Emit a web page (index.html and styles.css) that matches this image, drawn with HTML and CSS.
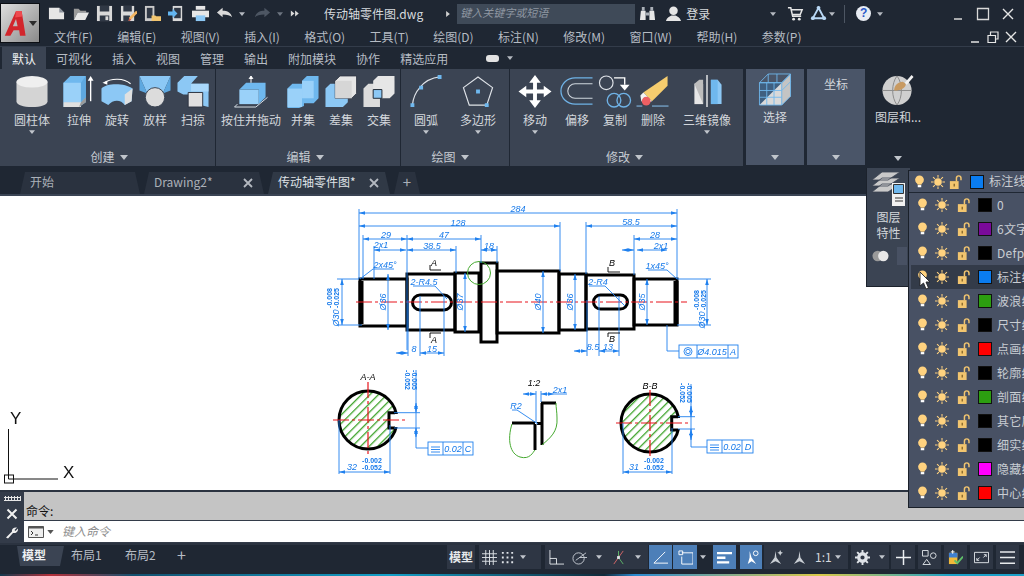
FILE: index.html
```html
<!DOCTYPE html>
<html lang="zh">
<head>
<meta charset="utf-8">
<title>传动轴零件图.dwg</title>
<link rel="stylesheet" href="styles.css">
</head>
<body>
<svg class="defs" width="0" height="0">
  <defs>
    <symbol id="bulb" viewBox="0 0 12 16"><circle cx="6" cy="5.5" r="5" fill="#ffd27f"/><path d="M3.6 9h4.8v2H3.6z" fill="#ffd27f"/><path d="M4 11.5h4v2.5H4z" fill="#fff"/></symbol>
    <symbol id="sun" viewBox="0 0 16 16"><circle cx="8" cy="8" r="4.3" fill="#ffd27f"/><path d="M8 0v3M8 13v3M0 8h3M13 8h3M2.3 2.3l2.2 2.2M11.5 11.5l2.2 2.2M13.7 2.3l-2.2 2.2M4.5 11.5l-2.2 2.2" stroke="#ffd27f" stroke-width="1.2"/></symbol>
    <symbol id="lock" viewBox="0 0 16 16"><path d="M1 7h10v9H1z" fill="#f2c56f"/><path d="M8.5 7V3.6A2.6 2.6 0 0 1 13.7 3.6V6" fill="none" stroke="#f2c56f" stroke-width="1.7"/><path d="M5.2 10h1.6v3H5.2z" fill="#8a6a2c"/></symbol>
    <symbol id="dd" viewBox="0 0 8 5"><path d="M0 0h8L4 5z" fill="currentColor"/></symbol>
    <marker id="ar" viewBox="0 0 10 6" refX="10" refY="3" markerWidth="6" markerHeight="4" orient="auto-start-reverse" markerUnits="userSpaceOnUse"><path d="M0 0L10 3L0 6z" fill="#1f80ee"/></marker>
    <pattern id="hatch" width="6" height="6" patternUnits="userSpaceOnUse" patternTransform="rotate(45)"><rect width="6" height="6" fill="#fff"/><rect width="1.3" height="6" fill="#3da32a"/></pattern>
  </defs>
</svg>
<div class="app">
  <header class="head">
    <div class="logo">
      <svg class="logo-a" viewBox="0 0 30 34"><path d="M1 33L15 2h7l5 31h-7l-1-7h-7l-4 7z" fill="#d2262c"/><path d="M15 12l-4 9h6z" fill="#bdbdbd"/><path d="M15 2h7l1 7-9 1z" fill="#ee4a4f"/></svg>
      <svg class="logo-dd"><use href="#dd"/></svg>
    </div>
    <div class="head-rows">
      <div class="qat">
        <svg class="qi" viewBox="0 0 18 18"><path d="M1 3h11l5 5v7H1z" fill="#e6e6e6"/><path d="M12 3v5h5z" fill="#8b929c"/></svg>
        <svg class="qi" viewBox="0 0 18 18"><path d="M2 4h5l2 2h6v2H6L2 16z" fill="#9a9a9a"/><path d="M6 8h12l-4 8H2z" fill="#e6e6e6"/></svg>
        <svg class="qi" viewBox="0 0 18 18"><path d="M1 1h16v16H1z" fill="#d9d9d9"/><path d="M4 1h10v6H4zM4 11h10v6H4z" fill="#303845"/><path d="M10 12h3v4h-3z" fill="#d9d9d9"/></svg>
        <svg class="qi" viewBox="0 0 18 18"><path d="M1 1h14v16H1z" fill="#d9d9d9"/><path d="M3.5 1h9v6h-9zM3.5 11h7v6h-7z" fill="#303845"/><path d="M9 17l1-4 7-7 2 2-7 7z" fill="#f3b562"/><path d="M9 17l1-3 2 2z" fill="#d04b4b"/></svg>
        <svg class="qi" viewBox="0 0 18 18"><path d="M1 1h10v16H1z" fill="#c9c9c9"/><path d="M3 3h6v11H3z" fill="#303845"/><path d="M8 11h4l1 1h5v5H8z" fill="#f2c56f"/></svg>
        <svg class="qi" viewBox="0 0 18 18"><path d="M5 1h10v16H5z" fill="#d9d9d9"/><path d="M6.5 3h7v11h-7z" fill="#303845"/><path d="M0 7h5V4l5 5-5 5v-3H0z" fill="#63b5f0"/></svg>
        <svg class="qi" viewBox="0 0 18 18"><path d="M4 1h10v4H4z" fill="#e6e6e6"/><path d="M0 6h18v7H0z" fill="#e6e6e6"/><path d="M4 11h10v6H4z" fill="#8cc8f5"/></svg>
        <svg class="qi" viewBox="0 0 18 18"><path d="M1 8l6-5v3c5 0 9 2 10 7-2-2-5-3-10-3v3z" fill="#d9d9d9"/></svg>
        <svg class="qd"><use href="#dd"/></svg>
        <svg class="qi" viewBox="0 0 18 18"><path d="M17 8l-6-5v3c-5 0-9 2-10 7 2-2 5-3 10-3v3z" fill="#4d5663"/></svg>
        <svg class="qd faded"><use href="#dd"/></svg>
        <svg class="qi sm" viewBox="0 0 18 18"><path d="M3 4l6 5-6 5zM10 4l6 5-6 5z" fill="#d9d9d9"/></svg>
        <span class="doc-title">传动轴零件图.dwg</span>
        <svg class="qd rot"><use href="#dd"/></svg>
        <div class="search">键入关键字或短语</div>
        <svg class="qi bino" viewBox="0 0 18 18"><path d="M2 6h5v10H1zM11 6h5l1 10h-6z" fill="#e6e6e6"/><path d="M3 2h3v4H3zM12 2h3v4h-3zM7 8h4v3H7z" fill="#aab0b8"/></svg>
        <svg class="qi user" viewBox="0 0 18 18"><circle cx="9" cy="6" r="4.5" fill="#e6e6e6"/><path d="M1 17c1-4 4-5 6-6h4c2 1 5 2 6 6z" fill="#e6e6e6"/></svg>
        <span class="login">登录</span>
        <svg class="qd login-dd"><use href="#dd"/></svg>
        <svg class="qi cart" viewBox="0 0 18 18"><path d="M1 3h3l2 9h9M5 5h11l-2 5H6" fill="none" stroke="#e6e6e6" stroke-width="1.6"/><circle cx="7" cy="15" r="1.5" fill="#e6e6e6"/><circle cx="13" cy="15" r="1.5" fill="#e6e6e6"/></svg>
        <svg class="qi tri" viewBox="0 0 18 18"><path d="M9 3L3 14h12z" fill="none" stroke="#b9d8f5" stroke-width="2"/><circle cx="9" cy="3" r="2" fill="#b9d8f5"/><circle cx="3" cy="14" r="2" fill="#b9d8f5"/><circle cx="15" cy="14" r="2" fill="#b9d8f5"/></svg>
        <svg class="qd"><use href="#dd"/></svg>
        <span class="sep"></span>
        <span class="help">?</span>
        <svg class="qd"><use href="#dd"/></svg>
        <svg class="win" viewBox="0 0 14 14"><path d="M3 12h8" stroke="#d9d9d9" stroke-width="1.5"/></svg>
        <svg class="win" viewBox="0 0 14 14"><path d="M1.5 1.5h11v11h-11z" fill="none" stroke="#d9d9d9" stroke-width="1.3"/></svg>
        <svg class="win" viewBox="0 0 14 14"><path d="M2 2l10 10M12 2L2 12" stroke="#e6e6e6" stroke-width="1.4"/></svg>
      </div>
      <nav class="menu">
        <span>文件(F)</span><span>编辑(E)</span><span>视图(V)</span><span>插入(I)</span><span>格式(O)</span><span>工具(T)</span><span>绘图(D)</span><span>标注(N)</span><span>修改(M)</span><span>窗口(W)</span><span>帮助(H)</span><span>参数(P)</span>
        <div class="doc-win">
          <svg class="win2" viewBox="0 0 12 12"><path d="M2 11h8" stroke="#e6e6e6" stroke-width="1.5"/></svg>
          <svg class="win2" viewBox="0 0 12 12"><path d="M1 4.5h7.5v7H1zM3.5 4V1H11v7H9" fill="none" stroke="#e6e6e6" stroke-width="1.2"/></svg>
          <svg class="win2" viewBox="0 0 12 12"><path d="M1 1l10 10M11 1L1 11" stroke="#e6e6e6" stroke-width="1.4"/></svg>
        </div>
      </nav>
    </div>
  </header>

  <div class="rtabs">
    <span class="rtab on">默认</span><span class="rtab">可视化</span><span class="rtab">插入</span><span class="rtab">视图</span><span class="rtab">管理</span><span class="rtab">输出</span><span class="rtab">附加模块</span><span class="rtab">协作</span><span class="rtab">精选应用</span>
    <span class="pill"></span><svg class="qd"><use href="#dd"/></svg>
  </div>

  <section class="ribbon">
    <div class="panel p-create">
      <div class="tools">
        <div class="tool t-cyl"><svg class="ic" viewBox="0 0 34 34"><path d="M1 7v20c0 4 7 6 16 6s16-2 16-6V7z" fill="#d4d4d4"/><ellipse cx="17" cy="7" rx="16" ry="6" fill="#efefef"/></svg><span>圆柱体</span><svg class="tdd"><use href="#dd"/></svg></div>
        <div class="tool"><svg class="ic" viewBox="0 0 34 34"><path d="M1 8l7-7h16v27l-7 5H1z" fill="#6fb8ee"/><path d="M1 8h18v20H1z" fill="#9ad1f9"/><path d="M19 8l5-7v22l-5 5z" fill="#5ea8e0"/><path d="M1 28h18v5H1z" fill="#e0e0e0"/><path d="M19 28l5-5v5l-7 5z" fill="#9a9a9a"/><path d="M29 27V4" stroke="#fff" stroke-width="1.4"/><path d="M26 6l3-5 3 5z" fill="#fff"/></svg><span>拉伸</span></div>
        <div class="tool"><svg class="ic" viewBox="0 0 34 34"><path d="M1 14c5-6 24-6 32 0l-1 13-7 4c-4-6-12-6-17 0l-7-4z" fill="#8cc8f5"/><path d="M25 20l8-6-1 13-7 4z" fill="#e0e0e0"/><path d="M4 8c7-5 20-5 27 1" fill="none" stroke="#fff" stroke-width="1.2"/><path d="M2 8l5-2v4z" fill="#fff"/></svg><span>旋转</span></div>
        <div class="tool"><svg class="ic" viewBox="0 0 34 34"><path d="M1 1h32l-8 18H9z" fill="#8cc8f5"/><path d="M1 1l8 18-8-3zM33 1l-8 18 8-3z" fill="#5ea8e0"/><circle cx="17" cy="23" r="10" fill="#dcdcdc" stroke="#3a4352" stroke-width="1"/></svg><span>放样</span></div>
        <div class="tool"><svg class="ic" viewBox="0 0 34 34"><path d="M1 8l7-7h14l-7 8 18 0v24l-16-4V20H7l-6-3z" fill="#8cc8f5"/><path d="M15 9h18v8H15z" fill="#a9d8fb"/><path d="M12 18h15v15H12z" fill="#e0e0e0" stroke="#2c3340"/></svg><span>扫掠</span></div>
      </div>
      <div class="ptitle">创建<svg class="pdd"><use href="#dd"/></svg></div>
    </div>
    <div class="panel p-edit">
      <div class="tools">
        <div class="tool w62"><svg class="ic" viewBox="0 0 34 34"><path d="M5 15h20v15H5z" fill="#9ad1f9"/><path d="M5 15l7-7h20l-7 7zM25 15l7-7v15l-7 7z" fill="#6fb8ee"/><path d="M17 8V2M15 4l2-3 2 3" stroke="#fff" fill="#fff"/><path d="M0 33h22M22 33l12-10M3 30l-3 3" stroke="#dce3ea" stroke-width="1"/></svg><span>按住并拖动</span></div>
        <div class="tool ml2"><svg class="ic" viewBox="0 0 34 34"><path d="M1 14l5-5h10v-3l5-5h12v23l-5 5h-10v3l-5 2H1z" fill="#6fb8ee"/><path d="M1 14h15v19H1z" fill="#9ad1f9"/><path d="M16 6h12v18H16z" fill="#9ad1f9"/></svg><span>并集</span></div>
        <div class="tool"><svg class="ic" viewBox="0 0 34 34"><path d="M1 14l5-5h8v14h10v5l-5 5H1z" fill="#8cc8f5"/><path d="M11 6l5-5h17v18l-5 5H11z" fill="#e6e6e6" stroke="#2c3340" stroke-width=".8"/><path d="M11 6h17v18H11z" fill="#d6d6d6"/></svg><span>差集</span></div>
        <div class="tool"><svg class="ic" viewBox="0 0 34 34"><path d="M1 14l5-5h12v24H1z" fill="#dcdcdc"/><path d="M11 6l5-5h17v18l-5 5H11z" fill="#e6e6e6"/><path d="M11 15h9v9h-9z" fill="#8cc8f5" stroke="#1f2733" stroke-width="1"/></svg><span>交集</span></div>
      </div>
      <div class="ptitle">编辑<svg class="pdd"><use href="#dd"/></svg></div>
    </div>
    <div class="panel p-draw">
      <div class="tools">
        <div class="tool w50"><svg class="ic" viewBox="0 0 34 34"><path d="M3 31C4 18 14 4 31 2" fill="none" stroke="#dfe3e8" stroke-width="1.2"/><path d="M1 29h4v4H1zM10 11h4v4h-4zM29 0h4v4h-4z" fill="#6fb8ee"/></svg><span>圆弧</span><svg class="tdd"><use href="#dd"/></svg></div>
        <div class="tool w54"><svg class="ic" viewBox="0 0 34 34"><path d="M17 2l15 11-6 18H8L2 13z" fill="none" stroke="#dfe3e8" stroke-width="1.2"/><path d="M15 15h4v4h-4zM24 29h4v4h-4z" fill="#6fb8ee"/></svg><span>多边形</span><svg class="tdd"><use href="#dd"/></svg></div>
      </div>
      <div class="ptitle">绘图<svg class="pdd"><use href="#dd"/></svg></div>
    </div>
    <div class="panel p-mod">
      <div class="tools">
        <div class="tool"><svg class="ic" viewBox="0 0 34 34"><path d="M17 0l6 8h-4v7h7v-4l8 6-8 6v-4h-7v7h4l-6 8-6-8h4v-7H8v4l-8-6 8-6v4h7V8h-4z" fill="#fff"/></svg><span>移动</span><svg class="tdd"><use href="#dd"/></svg></div>
        <div class="tool ml4"><svg class="ic" viewBox="0 0 34 34"><path d="M33 3H15A14 13 0 0 0 15 30h18" fill="none" stroke="#6fb2e6" stroke-width="1.3"/><path d="M33 9H15a7.500 7.500 0 0 0 0 15h18" fill="none" stroke="#cfd6dd" stroke-width="1.1"/></svg><span>偏移</span></div>
        <div class="tool"><svg class="ic" viewBox="0 0 34 34"><circle cx="8" cy="8" r="7" fill="none" stroke="#dfe3e8" stroke-width="1.2"/><path d="M16 3h11v7" fill="none" stroke="#fff" stroke-width="1.4"/><path d="M22 10h10l-5 6z" fill="#fff"/><circle cx="16" cy="26" r="7" fill="none" stroke="#6fb2e6" stroke-width="1.4"/><circle cx="26" cy="26" r="7" fill="none" stroke="#6fb2e6" stroke-width="1.4"/></svg><span>复制</span></div>
        <div class="tool"><svg class="ic" viewBox="0 0 34 34"><path d="M32 1v10L16 27l-9-9z" fill="#f6cd6e"/><path d="M7 18l-3 3 1 6 5 2 6-2z" fill="#f3f3f3"/><circle cx="10" cy="27" r="4.500" fill="#ee5f63"/><path d="M0 32h6M16 32h17" stroke="#8cc8f5" stroke-width="1"/></svg><span>删除</span></div>
        <div class="tool w56"><svg class="ic" viewBox="0 0 34 34"><path d="M4 9h9v21H4z" fill="#e6e6e6"/><path d="M4 9l5-4h4v25z" fill="#bdbdbd"/><path d="M21 5h7l4 5v20H21z" fill="#8cc8f5"/><path d="M21 5v25h7V5z" fill="#6fb8ee"/><path d="M17 0v33" stroke="#fff" stroke-width="1.3"/></svg><span>三维镜像</span><svg class="tdd"><use href="#dd"/></svg></div>
      </div>
      <div class="ptitle">修改<svg class="pdd"><use href="#dd"/></svg></div>
    </div>
    <div class="panel side p-sel">
      <div class="tool full"><svg class="ic" viewBox="0 0 34 34"><path d="M1 10h23v23H1z" fill="#3f5f80"/><path d="M24 33H1L24 10z" fill="#d9d9d9"/><path d="M24 10l9-9v23l-9 9z" fill="#c4c4c4"/><path d="M1 10l9-9h23l-9 9zM1 10h23v23H1zM8.500 10v23M16 10v23M1 18h23M1 25h23M24 10l9-9v23l-9 9M10 1v9M19 1v9M24 18l9-9" fill="none" stroke="#6fb8ee" stroke-width=".9"/></svg><span>选择</span></div>
      <svg class="sdd"><use href="#dd"/></svg>
    </div>
    <div class="panel side p-coord">
      <div class="tool full top"><span>坐标</span></div>
      <svg class="sdd"><use href="#dd"/></svg>
    </div>
    <div class="panel-plain">
      <div class="tool full"><svg class="ic" viewBox="0 0 34 34"><circle cx="16" cy="18" r="15" fill="#cfcfcf"/><path d="M1 18h30M16 3c-6 8-6 22 0 30M16 3c6 8 6 22 0 30" stroke="#8a8a8a" fill="none"/><path d="M13 18c0-5 4-9 9-9l3 2c0 4-4 7-12 7z" fill="#c89a62"/><path d="M24 10l7-8 2 2-7 8z" fill="#f2f2f2"/></svg><span>图层和...</span></div>
      <svg class="sdd"><use href="#dd"/></svg>
    </div>
  </section>

  <div class="dtabs">
    <span class="dtab first">开始</span>
    <span class="dtab">Drawing2*<svg class="dx" viewBox="0 0 10 10"><path d="M1 1l8 8M9 1l-8 8" stroke="#b4b9c0" stroke-width="1.8"/></svg></span>
    <span class="dtab on">传动轴零件图*<svg class="dx" viewBox="0 0 10 10"><path d="M1 1l8 8M9 1l-8 8" stroke="#b4b9c0" stroke-width="1.8"/></svg></span>
    <span class="dadd">+</span>
  </div>

  <main class="canvas">
    <svg class="drawing" viewBox="0 196 1024 294">
      <g class="shaft">
        <rect x="360" y="279" width="47" height="47"/><rect x="407" y="274" width="48" height="56"/><rect x="455" y="273" width="24" height="59"/><rect x="481" y="263" width="16" height="79"/><rect x="497" y="271" width="62" height="62"/><rect x="559" y="274" width="27" height="56"/><rect x="586" y="275" width="48" height="54"/><rect x="634" y="279" width="43" height="46"/>
        <rect x="412.500" y="295" width="39" height="15" rx="7.500"/><rect x="593.500" y="295" width="34" height="14" rx="7"/>
        <path class="thick" d="M361 281v43M676 281v43"/>
      </g>
      <g class="center"><path d="M356 302H687"/></g>
      <circle class="green" cx="479" cy="273" r="11.500"/>
      <g class="dim">
        <path class="d" d="M359 213H677"/><path class="d" d="M359 226H560"/><path class="d" d="M586 226H677"/>
        <path class="d" d="M363 239H407"/><path class="d" d="M407 239H481"/><path class="d" d="M634 239H677"/>
        <path class="d" d="M374 250H406"/><path class="d" d="M407 250H456"/><path class="d" d="M481 250H497"/>
        <path class="d" d="M622 250H634"/><path class="d" d="M637 250H667"/>
        <path class="d" d="M388 274V330"/><path class="d" d="M465 273V332"/><path class="d" d="M543 271V333"/><path class="d" d="M575 274V330"/><path class="d" d="M647 279V325"/>
        <path class="d" d="M342 279V325"/><path class="d" d="M707 279V325"/>
        <path class="d" d="M396 353H408"/><path class="d" d="M420 353H444"/><path class="d" d="M574 351H587"/><path class="d" d="M599 351H619"/>
        <path d="M359 209V279M677 209V279M560 222V271M586 222V274M363 235V279M407 235V350M481 235V263M497 246V263M634 235V275M456 246V273M374 246V279"/>
        <path d="M408 300V356M420 296V356M444 296V356M587 300V356M599 296V356M619 296V356"/>
        <path d="M337 279H359M337 325H362M677 279H711M677 325H711"/>
        <path d="M360 279L373 269H394M677 279L667 270H648M413 286H435L447 299M589 286H605L625 306"/>
        <rect x="679" y="345" width="59" height="13"/><path d="M697 345V358M728 345V358M667 325V351H679"/>
        <circle cx="688" cy="351.500" r="4"/><circle cx="688" cy="351.500" r="2.200"/>
        <text x="518" y="212">284</text><text x="458" y="226">128</text><text x="631" y="225">58.5</text><text x="386" y="238">29</text><text x="444" y="238">47</text><text x="655" y="238">28</text>
        <text x="381" y="248">2x1</text><text x="432" y="249">38.5</text><text x="489" y="249">18</text><text x="661" y="249">2x1</text>
        <text x="385" y="268">2x45°</text><text x="657" y="269">1x45°</text><text x="424" y="285">2-R4.5</text><text x="598" y="285">2-R4</text>
        <text x="414" y="352">8</text><text x="432" y="352">15</text><text x="593" y="350">8.5</text><text x="608" y="350">13</text>
        <text x="712" y="355">Ø4.015</text><text x="733" y="355">A</text>
        <text class="v" transform="translate(386 302) rotate(-90)">Ø36</text><text class="v" transform="translate(463 302) rotate(-90)">Ø37</text><text class="v" transform="translate(541 302) rotate(-90)">Ø40</text><text class="v" transform="translate(573 302) rotate(-90)">Ø36</text><text class="v" transform="translate(645 302) rotate(-90)">Ø35</text>
        <text class="v" transform="translate(339 318) rotate(-90)">Ø30</text>
        <text class="v" transform="translate(705 320) rotate(-90)">Ø30</text>
        <text class="blob" transform="translate(332 298) rotate(-90)">-0.008</text><text class="blob" transform="translate(339 298) rotate(-90)">-0.025</text>
        <text class="blob" transform="translate(699 300) rotate(-90)">-0.008</text><text class="blob" transform="translate(706 300) rotate(-90)">-0.025</text>
      </g>
      <g class="mark">
        <path d="M430 265V270H441M430 338V333H441M608 267V272H620M608 337V333H620"/>
        <text x="434" y="266">A</text><text x="434" y="343">A</text><text x="612" y="266">B</text><text x="612" y="342">B</text>
      </g>

      <g>
        <circle class="sect" cx="368" cy="420" r="29"/>
        <rect class="cut" x="389" y="414" width="12" height="13"/>
        <path class="key" d="M395 412.700H389V428H395"/>
        <path class="center" d="M333 420H406M368 382V455"/>
        <text class="blk" x="368" y="380">A-A</text>
        <g class="dim">
          <path class="d" d="M416 403V412"/><path class="d" d="M416 437V428"/>
          <path d="M416 370V448H428M394 412.700H420M394 428H420M339 420V474M390 425V474"/>
          <path class="d" d="M339 472H390"/>
          <rect x="428" y="442" width="45" height="13"/><path d="M443 442V455M463 442V455M431 447H440M431 449.500H440M431 452H440"/>
          <text x="453" y="452">0.02</text><text x="468" y="452">C</text>
          <text x="352" y="470">32</text><text class="blob" x="372" y="463">-0.002</text><text class="blob" x="372" y="470">-0.052</text>
          <text class="blob" transform="translate(412 380) rotate(90)">-0.005</text><text class="blob" transform="translate(405 380) rotate(90)">-0.052</text>
        </g>
      </g>

      <g>
        <path class="shaftline" d="M512 423H535M535 424V450M542 403V445M541 403H556M537 423.500H542"/>
        <path class="green" d="M512 424C507 440 510 454 520 457C530 460 533 452 535 450M542 445C550 438 558 432 557 418C557 412 556 408 556 403"/>
        <text class="blk" x="534" y="386">1:2</text>
        <g class="dim">
          <path class="d" d="M523 394H536"/><path class="d" d="M554 394H541"/>
          <path d="M536 391V423M541 391V402M554 394H567M512 410H517L538 424"/>
          <text x="560" y="393">2x1</text><text x="516" y="409">R2</text>
        </g>
      </g>

      <g>
        <circle class="sect" cx="650" cy="423" r="29"/>
        <rect class="cut" x="672" y="418" width="12" height="11"/>
        <path class="key" d="M678 416.700H671.700V430H678"/>
        <path class="center" d="M616 423H689M650 390V458"/>
        <text class="blk" x="650" y="389">B-B</text>
        <g class="dim">
          <path class="d" d="M691 406V416.700"/><path class="d" d="M691 440V429"/>
          <path d="M691 384V447H707M678 416.700H695M678 429H695M623 423V474M672 428V474"/>
          <path class="d" d="M623 472H672"/>
          <rect x="707" y="440" width="46" height="13"/><path d="M722 440V453M742 440V453M710 445H719M710 447.500H719M710 450H719"/>
          <text x="732" y="450">0.02</text><text x="748" y="450">D</text>
          <text x="634" y="470">31</text><text class="blob" x="654" y="463">-0.002</text><text class="blob" x="654" y="470">-0.052</text>
          <text class="blob" transform="translate(687 393) rotate(90)">-0.005</text><text class="blob" transform="translate(680 393) rotate(90)">-0.052</text>
        </g>
      </g>

      <g class="ucs">
        <path d="M8.500 429V479M8.500 479H58"/><rect x="4.500" y="475" width="9" height="8"/>
        <text x="10" y="424">Y</text><text x="63" y="478">X</text>
      </g>
    </svg>

    <div class="layer-panel">
      <svg class="lp-ic" viewBox="0 0 34 34"><path d="M10 0h18L16 8H0zM10 6h18L16 14H0zM10 12h18L16 20H0z" fill="#c9c9c9" stroke="#3a4352" stroke-width=".8"/><path d="M20 11h13v23H20z" fill="#f2f2f2"/><path d="M21.500 12.500h10v9h-10z" fill="#6fb8ee" stroke="#333"/><path d="M23 26h8M23 29h8" stroke="#333"/></svg>
      <span>图层</span><span>特性</span>
      <div class="lp-row"><svg class="lp-t" viewBox="0 0 18 12"><circle cx="6" cy="6" r="5.500" fill="#9a9a9a"/><circle cx="12" cy="6" r="5.500" fill="#e8e8e8"/></svg><span class="lp-box"></span></div>
    </div>

    <div class="flyout">
      <div class="fly-top"><svg class="lb"><use href="#bulb"/></svg><svg class="ls"><use href="#sun"/></svg><svg class="ll"><use href="#lock"/></svg><i class="sw blue"></i><span>标注线</span></div>
      <div class="fly-list">
        <div class="lrow"><svg class="lb"><use href="#bulb"/></svg><svg class="ls"><use href="#sun"/></svg><svg class="ll"><use href="#lock"/></svg><i class="sw black"></i><span>0</span></div>
        <div class="lrow"><svg class="lb"><use href="#bulb"/></svg><svg class="ls"><use href="#sun"/></svg><svg class="ll"><use href="#lock"/></svg><i class="sw purple"></i><span>6文字</span></div>
        <div class="lrow"><svg class="lb"><use href="#bulb"/></svg><svg class="ls"><use href="#sun"/></svg><svg class="ll"><use href="#lock"/></svg><i class="sw black"></i><span>Defpoints</span></div>
        <div class="lrow hov"><svg class="lb"><use href="#bulb"/></svg><svg class="ls"><use href="#sun"/></svg><svg class="ll"><use href="#lock"/></svg><i class="sw blue"></i><span>标注线</span></div>
        <div class="lrow"><svg class="lb"><use href="#bulb"/></svg><svg class="ls"><use href="#sun"/></svg><svg class="ll"><use href="#lock"/></svg><i class="sw grn"></i><span>波浪线</span></div>
        <div class="lrow"><svg class="lb"><use href="#bulb"/></svg><svg class="ls"><use href="#sun"/></svg><svg class="ll"><use href="#lock"/></svg><i class="sw black"></i><span>尺寸线</span></div>
        <div class="lrow"><svg class="lb"><use href="#bulb"/></svg><svg class="ls"><use href="#sun"/></svg><svg class="ll"><use href="#lock"/></svg><i class="sw red"></i><span>点画线</span></div>
        <div class="lrow"><svg class="lb"><use href="#bulb"/></svg><svg class="ls"><use href="#sun"/></svg><svg class="ll"><use href="#lock"/></svg><i class="sw black"></i><span>轮廓线</span></div>
        <div class="lrow"><svg class="lb"><use href="#bulb"/></svg><svg class="ls"><use href="#sun"/></svg><svg class="ll"><use href="#lock"/></svg><i class="sw grn"></i><span>剖面线</span></div>
        <div class="lrow"><svg class="lb"><use href="#bulb"/></svg><svg class="ls"><use href="#sun"/></svg><svg class="ll"><use href="#lock"/></svg><i class="sw black"></i><span>其它层</span></div>
        <div class="lrow"><svg class="lb"><use href="#bulb"/></svg><svg class="ls"><use href="#sun"/></svg><svg class="ll"><use href="#lock"/></svg><i class="sw black"></i><span>细实线</span></div>
        <div class="lrow"><svg class="lb"><use href="#bulb"/></svg><svg class="ls"><use href="#sun"/></svg><svg class="ll"><use href="#lock"/></svg><i class="sw magenta"></i><span>隐藏线</span></div>
        <div class="lrow"><svg class="lb"><use href="#bulb"/></svg><svg class="ls"><use href="#sun"/></svg><svg class="ll"><use href="#lock"/></svg><i class="sw red"></i><span>中心线</span></div>
      </div>
    </div>
    <svg class="cursor" viewBox="0 0 12 19"><path d="M1 1v14l3.500-3 2.500 6 2.500-1-2.500-6H11z" fill="#fff" stroke="#222" stroke-width=".9"/></svg>
  </main>

  <section class="cmd">
    <div class="cmd-side">
      <span class="grip"></span>
      <svg class="cs-ic" viewBox="0 0 12 12"><path d="M1.500 1.500l9 9M10.500 1.500l-9 9" stroke="#f0f0f0" stroke-width="2"/></svg>
      <svg class="cs-ic" viewBox="0 0 12 12"><path d="M0 10.500L6 4.500C5.500 2 7.500 0 11 .5L8.500 3 9.500 4 12 1.500c.5 3-2 5-5 4.500l-5 5.500z" fill="#f0f0f0"/></svg>
    </div>
    <div class="cmd-main">
      <div class="cmd-hist">命令:</div>
      <div class="cmd-input">
        <svg class="prompt" viewBox="0 0 16 12"><path d="M.5.500h15v11H.5z" fill="#eee" stroke="#555"/><path d="M.5.500h15v2H.5z" fill="#555"/><path d="M3 5l2 2-2 2M7 9h3" fill="none" stroke="#333"/></svg>
        <svg class="pr-dd"><use href="#dd"/></svg>
        <span>键入命令</span>
      </div>
    </div>
  </section>

  <footer class="status">
    <div class="ltabs">
      <span class="ltab on">模型</span><span class="ltab">布局1</span><span class="ltab">布局2</span><span class="ltab add">+</span>
    </div>
    <div class="sbar">
      <span class="sb model">模型</span>
      <span class="sgroup g1">
        <svg class="si" viewBox="0 0 16 16"><path d="M4 0v16M8 0v16M12 0v16M0 4h16M0 8h16M0 12h16" stroke="#dfe3e8"/></svg>
        <svg class="si" viewBox="0 0 16 16"><path d="M2 2h2v2H2zM7 2h2v2H7zM12 2h2v2h-2zM2 7h2v2H2zM7 7h2v2H7zM12 7h2v2h-2zM2 12h2v2H2zM7 12h2v2H7zM12 12h2v2h-2z" fill="#dfe3e8"/></svg>
        <svg class="sd"><use href="#dd"/></svg>
      </span>
      <span class="sgroup g2">
        <svg class="si" viewBox="0 0 16 16"><path d="M1 0v15h15" fill="none" stroke="#dfe3e8"/><path d="M1 9h7v6" fill="none" stroke="#dfe3e8"/></svg>
        <svg class="si" viewBox="0 0 16 16"><circle cx="7" cy="9" r="6" fill="none" stroke="#c6ccd3"/><path d="M4 11L15 3M8 8h8" stroke="#c6ccd3"/></svg>
        <svg class="sd"><use href="#dd"/></svg>
        <svg class="si" viewBox="0 0 16 16"><path d="M3 15L13 1" stroke="#d86868"/><path d="M8 8l5 7M8 8V1" stroke="#5fb86a"/><rect x="6.500" y="6.500" width="3" height="3" fill="#dfe3e8"/></svg>
        <svg class="sd"><use href="#dd"/></svg>
      </span>
      <span class="sb act wa"><svg class="si" viewBox="0 0 16 16"><path d="M1 14h15M1 14L13 2" stroke="#fff" fill="none"/></svg></span>
      <span class="sb act wb"><svg class="si" viewBox="0 0 16 16"><path d="M4 3h12v12H4V7" fill="none" stroke="#fff"/><path d="M1 1h4v4H1z" fill="none" stroke="#fff"/></svg></span>
      <svg class="sd solo"><use href="#dd"/></svg>
      <span class="sb act wc"><svg class="si" viewBox="0 0 16 16"><path d="M0 2h16v2.500H0zM0 7h9v2.500H0zM0 12h13v2.500H0z" fill="#fff"/></svg></span>
      <span class="sb act wd"><svg class="si" viewBox="0 0 16 16"><path d="M6 1l2 7 5 7-5-3-4 3 2-7z" fill="#fff"/><circle cx="12.500" cy="3.500" r="2.500" fill="none" stroke="#fff"/></svg></span>
      <span class="sgroup g3">
        <svg class="si" viewBox="0 0 16 16"><path d="M8 1l1 7 5 7-6-3-6 3 5-7z" fill="#c9ced4"/><path d="M13 0l1 2 2 1-2 1-1 2-1-2-2-1 2-1z" fill="#c9ced4"/></svg>
        <svg class="si" viewBox="0 0 16 16"><path d="M8 1l1 7 5 7-6-3-6 3 5-7z" fill="#c9ced4"/></svg>
        <span class="scale">1:1</span>
        <svg class="sd"><use href="#dd"/></svg>
      </span>
      <span class="sgroup g4">
        <svg class="si" viewBox="0 0 16 16"><circle cx="8" cy="8" r="4" fill="none" stroke="#dfe3e8" stroke-width="3.500"/><path d="M8 0v3M8 13v3M0 8h3M13 8h3M2.300 2.300l2 2M11.700 11.700l2 2M13.700 2.300l-2 2M4.300 11.700l-2 2" stroke="#dfe3e8" stroke-width="2"/></svg>
        <svg class="sd"><use href="#dd"/></svg>
      </span>
      <span class="sb plus"><svg class="si" viewBox="0 0 16 16"><path d="M8 0v16M0 8h16" stroke="#eceff2" stroke-width="1.600"/></svg></span>
      <span class="sb icn"><svg class="si" viewBox="0 0 16 16"><path d="M.5.500h6v6h-6z" fill="none" stroke="#dfe3e8"/><circle cx="12" cy="6" r="3" fill="none" stroke="#dfe3e8"/><path d="M5 10l4 5.500H1z" fill="none" stroke="#dfe3e8"/></svg></span>
      <span class="sb icn"><svg class="si" viewBox="0 0 16 16"><path d="M1 3h9v12H1z" fill="#f0b93a"/><path d="M1 3h9v5H1z" fill="#3f7fd0"/><path d="M5 0v4M3 2h4" stroke="#fff"/><path d="M7 11l3 3 6-7" fill="none" stroke="#5fc06a" stroke-width="2"/></svg></span>
      <span class="sb icn"><svg class="si" viewBox="0 0 16 16"><path d="M.5 2.500h15v11H.5z" fill="none" stroke="#dfe3e8"/><path d="M3 11l3-3M3 8.500V11h2.500M13 5l-3 3M13 7.500V5h-2.500" fill="none" stroke="#dfe3e8"/></svg></span>
      <span class="sb icn last"><svg class="si" viewBox="0 0 16 16"><path d="M0 2h16M0 8h16M0 14h16" stroke="#e6e9ec" stroke-width="1.600"/></svg></span>
    </div>
  </footer>
  <div class="strip"></div>
</div>
</body>
</html>
```
FILE: styles.css
```css
* { box-sizing: border-box; }
html, body { margin: 0; height: 100%; overflow: hidden; background: #1f2733; }
body { font: 12px/1.2 "Noto Sans CJK SC", "Noto Sans", sans-serif; color: #c5cad1; }
.defs { position: absolute; }
.app { width: 1024px; height: 576px; display: flex; flex-direction: column; overflow: hidden; }

/* header */
.head { height: 47px; display: flex; background: #1f2733; border-bottom: 1px solid #333c4a; }
.logo { width: 40px; height: 40px; margin-top: 3px; background: linear-gradient(135deg, #dedede, #8a8a8a); border: 1px solid #0c0f14; display: flex; align-items: center; padding-left: 3px; gap: 1px; }
.logo-a { width: 24px; height: 28px; }
.logo-dd { width: 8px; height: 5px; color: #2b2b2b; }
.head-rows { flex: 1; display: flex; flex-direction: column; }
.qat { height: 28px; display: flex; align-items: center; padding-left: 8px; white-space: nowrap; }
.qi { width: 17px; height: 17px; margin-right: 7px; flex: none; }
.qi.sm { width: 11px; height: 11px; margin-left: -3px; }
.qd { width: 6px; height: 4px; color: #b4b9c0; flex: none; }
.qi + .qd { margin-right: 9px; margin-left: -1px; }
.qi + .qd.faded { color: #6d7580; }
.qd.rot { transform: rotate(-90deg); margin: 0 6px 0 22px; color: #d0d0d0; }
.doc-title { color: #d6dade; margin-left: 17px; font-size: 12px; flex: none; }
.search { width: 178px; height: 20px; background: #3f4a58; color: #8e96a1; font-size: 11px; font-style: italic; padding: 2px 3px; margin-right: 4px; flex: none; }
.user { margin-left: 2px; margin-right: 3px; }
.login { color: #d6dade; margin-left: 1px; flex: none; }
.qi + .qd.login-dd, .qd.login-dd { margin: 0 11px 0 60px; }
.cart { margin-right: 6px; }
.tri { margin-right: 3px; }
.sep { width: 1px; height: 18px; background: #4d5663; margin: 0 11px 0 0; flex: none; }
.help { width: 15px; height: 15px; border-radius: 50%; background: #e8ecf3; color: #2a58c8; font: bold 12px/15px "Liberation Sans", sans-serif; text-align: center; margin-right: 6px; flex: none; }
.help + .qd { margin-right: 57px; }
.win { width: 14px; height: 14px; flex: none; margin-left: 11px; }
.menu { height: 19px; display: flex; align-items: center; gap: 24.4px; padding-left: 14px; font-size: 12px; color: #b6bcc4; white-space: nowrap; }
.doc-win { margin-left: auto; display: flex; gap: 6px; padding-right: 7px; }
.win2 { width: 12px; height: 12px; }

/* ribbon tabs */
.rtabs { height: 22px; display: flex; align-items: center; padding-left: 2px; background: #1f2733; }
.rtab { height: 22px; line-height: 24px; padding: 0 10px; color: #b6bcc4; }
.rtab.on { background: #3b4453; color: #eef0f2; }
.pill { width: 13px; height: 7px; margin: 0 8px 0 28px; background: #e2e2e2; border-radius: 3px; }

/* ribbon */
.ribbon { height: 97px; display: flex; gap: 1px; background: #1f2733; }
.panel { background: #3b4453; display: flex; flex-direction: column; height: 97px; }
.p-create { width: 215px; padding-left: 13px; }
.p-edit { width: 184px; padding-left: 4px; }
.p-draw { width: 108px; }
.p-mod { width: 233px; padding-left: 6px; margin-right: 2px; }
.side { background: #4a5568; width: 58px; align-items: center; position: relative; margin-right: 2px; height: 96px; }
.tools { display: flex; flex: 1; }
.tool { width: 38px; display: flex; flex-direction: column; align-items: center; padding-top: 6px; color: #d3d7dc; white-space: nowrap; font-size: 12px; }
.tool span { margin-top: 4px; line-height: 16px; }
.ic { width: 34px; height: 33px; flex: none; }
.t-cyl { margin-right: 9px; }
.w62 { width: 62px; }
.w50 { width: 50px; }
.w54 { width: 54px; }
.w56 { width: 56px; margin-left: 7px; }
.ml2 { margin-left: 2px; }
.ml4 { margin-left: 4px; }
.tdd { width: 6px; height: 4px; color: #c0c5cb; margin-top: 2px; }
.ptitle { height: 18px; display: flex; align-items: center; justify-content: center; gap: 5px; color: #c5cad1; padding: 0 10px 0 0; }
.pdd { width: 8px; height: 5px; color: #c0c5cb; }
.full { width: 100%; padding-top: 4px; }
.full span { margin-top: 3px; }
.sdd { width: 8px; height: 5px; color: #c0c5cb; margin-top: auto; margin-bottom: 5px; flex: none; }
.panel-plain { width: 60px; height: 97px; display: flex; flex-direction: column; align-items: center; }
.panel-plain .tool { padding-top: 4px; }

/* document tabs */
.dtabs { height: 30px; padding: 6px 0 0 20px; display: flex; background: #1f2733; border-bottom: 2px solid #3a4454; gap: 4px; }
.dtab { width: 120px; height: 22px; line-height: 20px; padding-left: 10px; background: #2a323f; color: #aab0b8; position: relative; clip-path: polygon(5px 0, calc(100% - 5px) 0, 100% 100%, 0 100%); flex: none; }
.dtab.on { color: #dfe2e6; background: #303946; width: 122px; }
.dx { position: absolute; right: 11px; top: 6px; width: 10px; height: 10px; }
.dadd { width: 26px; height: 22px; line-height: 20px; text-align: center; font-size: 15px; background: #2a323f; color: #aab0b8; clip-path: polygon(5px 0, calc(100% - 5px) 0, 100% 100%, 0 100%); }

/* canvas */
.canvas { height: 294px; background: #fff; position: relative; }
.drawing { width: 1024px; height: 294px; display: block; filter: blur(.3px); }
.drawing text { font: italic 9px "Liberation Sans", sans-serif; text-anchor: middle; }
.shaft rect { fill: none; stroke: #000; stroke-width: 3; }
.shaft .thick { stroke: #000; stroke-width: 5; fill: none; }
.shaftline { stroke: #000; stroke-width: 3; fill: none; }
.center { stroke: #e8141c; stroke-width: 1.2; stroke-dasharray: 16 3 3 3; fill: none; }
.green { fill: none; stroke: #44a82e; stroke-width: 1; }
.dim { fill: none; stroke: #1f80ee; stroke-width: .9; }
.dim text { fill: #1478ea; stroke: none; }
.dim .d { marker-start: url(#ar); marker-end: url(#ar); }
.drawing .dim text.blob { font: bold 7px "Liberation Sans", sans-serif; }
.mark { fill: none; stroke: #000; stroke-width: .9; }
.mark text, .blk { fill: #000; stroke: none; }
.sect { fill: url(#hatch); stroke: #000; stroke-width: 3; }
.cut { fill: #fff; }
.key { fill: none; stroke: #000; stroke-width: 3; }
.ucs { fill: none; stroke: #111; stroke-width: 1; }
.drawing .ucs text { fill: #111; stroke: none; font: 17px "Liberation Sans", sans-serif; text-anchor: start; }

/* layer flyout */
.layer-panel { position: absolute; left: 866px; top: -28px; width: 44px; height: 119px; background: #3b4453; border-left: 1px solid #1c222c; border-bottom: 1px solid #1c222c; display: flex; flex-direction: column; align-items: center; padding-top: 4px; font-size: 12px; line-height: 16px; color: #d3d7dc; }
.lp-ic { width: 34px; height: 34px; margin-bottom: 3px; }
.lp-row { display: flex; align-items: center; gap: 8px; margin-top: 6px; align-self: flex-start; padding-left: 5px; }
.lp-t { width: 17px; height: 12px; }
.lp-box { width: 10px; height: 18px; background: #485163; }
.flyout { position: absolute; left: 908px; top: -26px; width: 116px; height: 338px; background: #485164; border: 1px solid #1a2029; border-right: 0; white-space: nowrap; overflow: hidden; }
.fly-top { height: 22px; display: flex; align-items: center; padding-left: 5px; border-bottom: 1px solid #1f2733; color: #c9cdd3; }
.lrow { height: 24px; display: flex; align-items: center; padding-left: 8px; color: #c9cdd3; font-size: 12px; overflow: hidden; }
.lrow.hov { background: #333b49; margin-left: 2px; padding-left: 6px; }
.lb { width: 11px; height: 14px; flex: none; }
.ls { width: 14px; height: 14px; margin-left: 7px; flex: none; }
.ll { width: 14px; height: 14px; margin-left: 8px; flex: none; }
.fly-top .ll { margin-left: 4px; }
.fly-top .ls { margin-left: 6px; }
.sw { width: 14px; height: 14px; border: 1px solid #111; margin: 0 5px 0 7px; flex: none; }
.fly-top span, .lrow span { letter-spacing: .3px; }
.blue { background: #0a7cf0; }
.black { background: #000; }
.purple { background: #7a0a9a; }
.grn { background: #2c9e10; }
.red { background: #f00; }
.magenta { background: #f0f; }
.cursor { position: absolute; left: 919px; top: 75px; width: 12px; height: 19px; }

/* command */
.cmd { height: 53px; display: flex; background: #333b49; border-top: 2px solid #2b3340; }
.cmd-side { width: 24px; display: flex; flex-direction: column; align-items: center; padding-top: 4px; gap: 7px; }
.grip { width: 17px; height: 5px; background-image: radial-gradient(#e6e6e6 1px, transparent 1.200px); background-size: 3px 3px; }
.cs-ic { width: 12px; height: 12px; }
.cmd-main { flex: 1; display: flex; flex-direction: column; }
.cmd-hist { height: 28px; background: #c4c4c4; color: #111; padding: 11px 0 0 2px; font-size: 12px; line-height: 15px; }
.cmd-input { height: 21px; margin-top: 1px; background: #fff; display: flex; align-items: center; padding-left: 4px; color: #8d8d8d; font-style: italic; }
.prompt { width: 16px; height: 12px; }
.pr-dd { width: 7px; height: 4px; color: #555; margin-left: 3px; }
.cmd-input span { margin-left: 8px; }

/* status */
.status { height: 31px; display: flex; background: #1f2733; border-top: 2px solid #2b3340; color: #b6bcc4; }
.ltabs { display: flex; padding-left: 14px; height: 22px; align-items: center; font-size: 12px; }
.ltab { width: 54px; height: 20px; line-height: 18px; padding-left: 7px; }
.ltab.on { width: 50px; padding-left: 8px; background: #3b4453; color: #eef0f2; font-weight: 700; clip-path: polygon(3px 0, 100% 0, calc(100% - 4px) 100%, 6px 100%); }
.ltab.add { font-size: 16px; line-height: 17px; padding-left: 5px; width: 22px; }
.sbar { margin-left: auto; margin-right: 5px; height: 24px; display: flex; align-items: center; }
.sb { height: 24px; display: flex; align-items: center; justify-content: center; background: #2e3644; flex: none; }
.sgroup { height: 24px; display: flex; align-items: center; background: #2e3644; flex: none; }
.si { width: 15px; height: 15px; flex: none; }
.sd { width: 6px; height: 4px; color: #c0c5cb; flex: none; }
.sd.solo { margin: 0 7px 0 3px; }
.model { width: 28px; color: #e6e9ec; font-weight: 700; margin-right: 4px; }
.g1 { width: 62px; padding-left: 3px; margin-right: 4px; }
.g1 .si + .si { margin-left: 3px; }
.g1 .sd { margin-left: 5px; }
.g2 { width: 103px; padding-left: 4px; margin-right: 1px; }
.g2 .si:nth-child(2) { margin-left: 8px; }
.g2 .sd { margin-left: 9px; }
.g2 .si:nth-child(4) { margin-left: 9px; }
.act { background: #4d7fb8; }
.wa { width: 23px; margin-right: 1px; }
.wb { width: 24px; }
.wc { width: 23px; margin-right: 4px; }
.wd { width: 22px; margin-right: 2px; }
.g3 { width: 84px; padding-left: 4px; margin-right: 3px; }
.g3 .si + .si { margin-left: 9px; }
.scale { margin-left: 8px; color: #d3d7dc; }
.g3 .sd { margin-left: 3px; }
.g4 { width: 38px; padding-left: 4px; margin-right: 2px; }
.g4 .sd { margin-left: 9px; }
.plus { width: 24px; margin-right: 3px; }
.icn { width: 23px; margin-right: 3px; }
.icn.last { margin-right: 0; }
.strip { height: 2px; flex: none; background: linear-gradient(90deg, #12394e, #b4303a 5%, #12506e 13%, #13a0c8 38%, #102a3a 59%, #2a8ad0 62%, #d8c848 80%, #1aa0c8 93%); }
```
